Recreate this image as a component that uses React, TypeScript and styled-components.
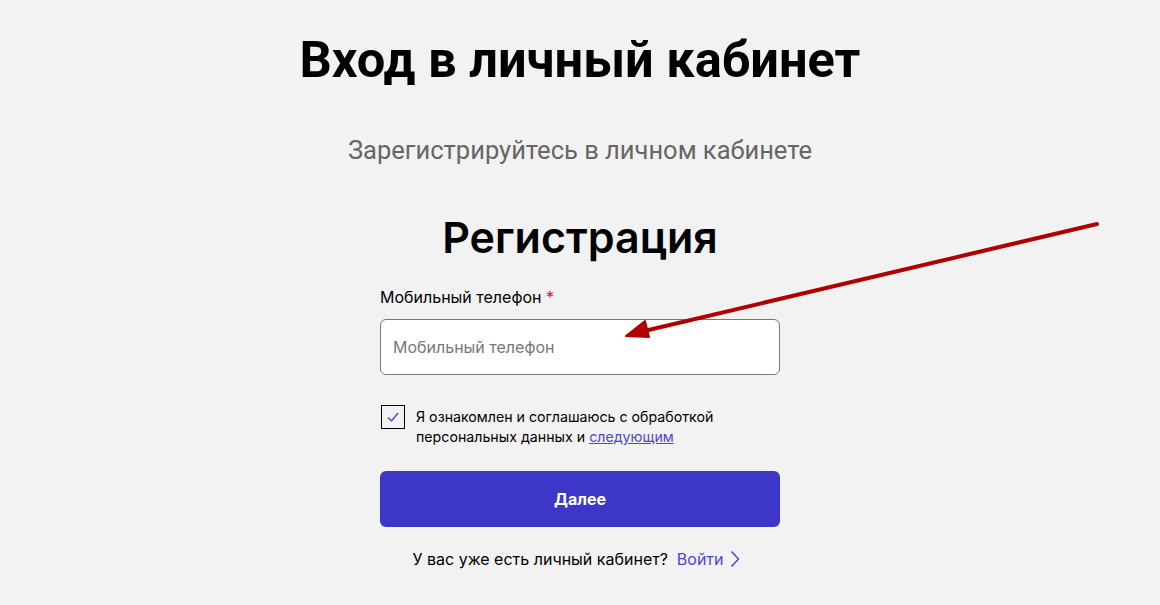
import React from 'react';
import styled, { createGlobalStyle } from 'styled-components';

const GlobalStyle = createGlobalStyle`
  html, body {
    margin: 0;
    padding: 0;
    background: #f2f2f2;
  }
  body {
    font-family: Inter, 'Noto Sans', sans-serif;
    color: #000;
  }
`;

const Page = styled.div`
  position: relative;
  width: 1160px;
  height: 605px;
  overflow: hidden;
  display: flex;
  flex-direction: column;
  align-items: center;
`;

const Title = styled.h1`
  margin: 30px 0 0;
  font-family: Roboto, sans-serif;
  font-size: 50.6px;
  font-weight: 700;
  line-height: 60px;
`;

const Subtitle = styled.p`
  margin: 45px 0 0;
  font-family: Roboto, sans-serif;
  font-size: 25.5px;
  line-height: 30px;
  color: #666;
`;

const Form = styled.form`
  width: 400px;
  margin-top: 47px;
  display: flex;
  flex-direction: column;
`;

const FormTitle = styled.h2`
  margin: 0;
  text-align: center;
  font-size: 43px;
  font-weight: 600;
  line-height: 50px;
`;

const Label = styled.label`
  margin-top: 25px;
  font-size: 16px;
  line-height: 20px;
`;

const Required = styled.span`
  color: #e0102a;
`;

const Input = styled.input`
  box-sizing: border-box;
  margin-top: 12px;
  height: 56px;
  width: 100%;
  padding: 0 12px;
  border: 1px solid #747884;
  border-radius: 6px;
  background: #fff;
  font-family: Inter, sans-serif;
  font-size: 16px;
  outline: none;
  &::placeholder {
    color: #74777f;
  }
`;

const Consent = styled.div`
  margin-top: 30px;
  display: flex;
  gap: 11px;
  align-items: flex-start;
`;

const Box = styled.span`
  box-sizing: border-box;
  flex: none;
  width: 24px;
  height: 24px;
  margin-left: 1px;
  border: 1.5px solid #000;
  display: flex;
  align-items: center;
  justify-content: center;
`;

const ConsentText = styled.span`
  padding-top: 2px;
  font-size: 14.2px;
  line-height: 20px;
`;

const Link = styled.a`
  color: #4b47d6;
  text-decoration: underline;
`;

const Button = styled.button`
  margin-top: 24px;
  height: 56px;
  border: none;
  border-radius: 6px;
  background: #3c37c9;
  color: #fff;
  font-family: Inter, sans-serif;
  font-size: 16px;
  font-weight: 700;
`;

const Footer = styled.div`
  margin-top: 22px;
  padding-right: 8px;
  display: flex;
  justify-content: center;
  align-items: center;
  gap: 9px;
  font-size: 16px;
  line-height: 20px;
`;

const Login = styled.a`
  color: #4b47d6;
  display: flex;
  align-items: center;
  gap: 6px;
`;

const Arrow = styled.svg`
  position: absolute;
  left: 0;
  top: 0;
  pointer-events: none;
`;

export default function App() {
  return (
    <Page>
      <GlobalStyle />
      <Title>Вход в личный кабинет</Title>
      <Subtitle>Зарегистрируйтесь в личном кабинете</Subtitle>
      <Form>
        <FormTitle>Регистрация</FormTitle>
        <Label>
          Мобильный телефон <Required>*</Required>
        </Label>
        <Input placeholder="Мобильный телефон" />
        <Consent>
          <Box>
            <svg width="14" height="12" viewBox="0 0 14 12">
              <path d="M2 6.5 L5.5 10 L12 2" fill="none" stroke="#4b47d6" strokeWidth="1.4" />
            </svg>
          </Box>
          <ConsentText>
            Я ознакомлен и соглашаюсь с обработкой
            <br />
            персональных данных и <Link>следующим</Link>
          </ConsentText>
        </Consent>
        <Button type="button">Далее</Button>
        <Footer>
          <span>У вас уже есть личный кабинет?</span>
          <Login>
            Войти
            <svg width="10" height="18" viewBox="0 0 10 18">
              <path d="M1.5 1.5 L8.5 9 L1.5 16.5" fill="none" stroke="#4b47d6" strokeWidth="1.5" />
            </svg>
          </Login>
        </Footer>
      </Form>
      <Arrow width="1160" height="605">
        <line x1="1097" y1="224" x2="640" y2="332" stroke="#b00000" strokeWidth="4" strokeLinecap="round" />
        <path d="M626 336 L645 321 L649 337 Z" fill="#b00000" stroke="#b00000" strokeWidth="2" strokeLinejoin="round" />
      </Arrow>
    </Page>
  );
}
